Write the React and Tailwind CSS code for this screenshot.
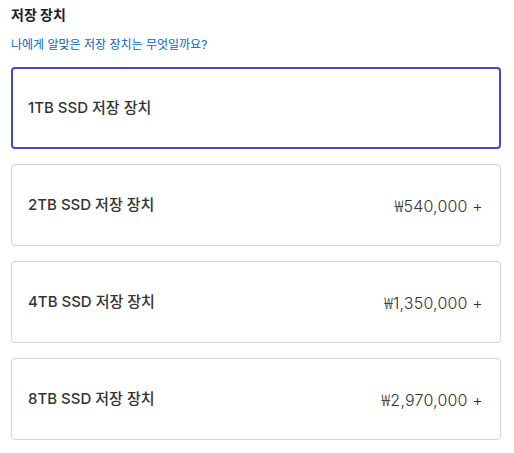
import React, { useState } from 'react';

const options = [
  { id: '1tb', label: '1TB SSD 저장 장치', price: null },
  { id: '2tb', label: '2TB SSD 저장 장치', price: '540,000 +' },
  { id: '4tb', label: '4TB SSD 저장 장치', price: '1,350,000 +' },
  { id: '8tb', label: '8TB SSD 저장 장치', price: '2,970,000 +' },
];

const App = () => {
  const [selected, setSelected] = useState('1tb');

  return (
    <div className="w-[514px] h-[453px] bg-white pl-[11px] pr-[13px] pt-[5px] font-['Inter','Noto_Sans_CJK_KR',sans-serif] text-[#1d1d1f]">
      <h2 className="text-[14px] font-bold leading-[20px]">저장 장치</h2>
      <a href="#" className="block mt-[12px] text-[12px] leading-[16px] text-[#0066cc]">
        나에게 알맞은 저장 장치는 무엇일까요?
      </a>

      <div className="mt-[14px] flex flex-col gap-[15px]">
        {options.map((opt) => {
          const isSelected = selected === opt.id;
          return (
            <button
              key={opt.id}
              onClick={() => setSelected(opt.id)}
              className={`h-[82px] w-full flex items-center justify-between rounded-[4px] bg-white text-left ${
                isSelected ? 'border-2 border-[#3c4bd2] pl-[15px] pr-[16px]' : 'border border-[#d2d2d7] pl-[16px] pr-[17px]'
              }`}
            >
              <span className="text-[15px] font-medium text-[#333]">{opt.label}</span>
              {opt.price && (
                <span className="text-[16px] font-light text-[#333] tracking-[0.2px]">
                  <span className="font-['Noto_Sans_CJK_KR',sans-serif] font-light">₩</span>
                  {opt.price}
                </span>
              )}
            </button>
          );
        })}
      </div>
    </div>
  );
};

export default App;
